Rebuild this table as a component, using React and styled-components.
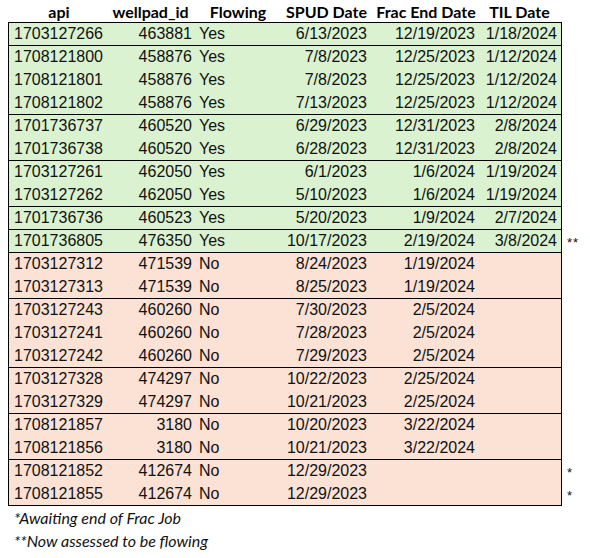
import React from "react";
import styled, { createGlobalStyle } from "styled-components";

const GlobalStyle = createGlobalStyle`
  body {
    margin: 0;
    background: #fff;
  }
`;

// column layout shared by header, rows
const columns = [
  { key: "api", title: "api", width: 95, align: "left", pad: 5 },
  { key: "wellpad", title: "wellpad_id", width: 93, align: "right", pad: 5 },
  { key: "flowing", title: "Flowing", width: 82, align: "left", pad: 2 },
  { key: "spud", title: "SPUD Date", width: 95, align: "right", pad: 7 },
  { key: "frac", title: "Frac End Date", width: 104, align: "right", pad: 3 },
  { key: "til", title: "TIL Date", width: 83, align: "right", pad: 4 },
];

const template = columns.map((c) => c.width + "px").join(" ");

const fills = {
  green: "#daf2d0",
  red: "#fbe2d5",
};

const groups = [
  { fill: "green", rows: [["1703127266", "463881", "Yes", "6/13/2023", "12/19/2023", "1/18/2024"]] },
  {
    fill: "green",
    rows: [
      ["1708121800", "458876", "Yes", "7/8/2023", "12/25/2023", "1/12/2024"],
      ["1708121801", "458876", "Yes", "7/8/2023", "12/25/2023", "1/12/2024"],
      ["1708121802", "458876", "Yes", "7/13/2023", "12/25/2023", "1/12/2024"],
    ],
  },
  {
    fill: "green",
    rows: [
      ["1701736737", "460520", "Yes", "6/29/2023", "12/31/2023", "2/8/2024"],
      ["1701736738", "460520", "Yes", "6/28/2023", "12/31/2023", "2/8/2024"],
    ],
  },
  {
    fill: "green",
    rows: [
      ["1703127261", "462050", "Yes", "6/1/2023", "1/6/2024", "1/19/2024"],
      ["1703127262", "462050", "Yes", "5/10/2023", "1/6/2024", "1/19/2024"],
    ],
  },
  { fill: "green", rows: [["1701736736", "460523", "Yes", "5/20/2023", "1/9/2024", "2/7/2024"]] },
  { fill: "green", rows: [["1701736805", "476350", "Yes", "10/17/2023", "2/19/2024", "3/8/2024", "**"]] },
  {
    fill: "red",
    rows: [
      ["1703127312", "471539", "No", "8/24/2023", "1/19/2024", ""],
      ["1703127313", "471539", "No", "8/25/2023", "1/19/2024", ""],
    ],
  },
  {
    fill: "red",
    rows: [
      ["1703127243", "460260", "No", "7/30/2023", "2/5/2024", ""],
      ["1703127241", "460260", "No", "7/28/2023", "2/5/2024", ""],
      ["1703127242", "460260", "No", "7/29/2023", "2/5/2024", ""],
    ],
  },
  {
    fill: "red",
    rows: [
      ["1703127328", "474297", "No", "10/22/2023", "2/25/2024", ""],
      ["1703127329", "474297", "No", "10/21/2023", "2/25/2024", ""],
    ],
  },
  {
    fill: "red",
    rows: [
      ["1708121857", "3180", "No", "10/20/2023", "3/22/2024", ""],
      ["1708121856", "3180", "No", "10/21/2023", "3/22/2024", ""],
    ],
  },
  {
    fill: "red",
    rows: [
      ["1708121852", "412674", "No", "12/29/2023", "", "", "*"],
      ["1708121855", "412674", "No", "12/29/2023", "", "", "*"],
    ],
  },
];

const Page = styled.div`
  padding-left: 8px;
  width: 590px;
  box-sizing: border-box;
`;

const HeaderRow = styled.div`
  display: grid;
  grid-template-columns: ${template};
  height: 22px;
  margin-left: 1px;
  align-items: center;
`;

const HeaderCell = styled.div`
  font-family: Lato, "Liberation Sans", sans-serif;
  font-weight: 700;
  font-size: 16px;
  color: #000;
  text-align: center;
  white-space: nowrap;
  padding-left: ${(p) => p.$shift || 0}px;
`;

const SheetArea = styled.div`
  display: flex;
  align-items: flex-start;
`;

const Sheet = styled.div`
  border: 1px solid #000;
  display: flex;
  flex-direction: column;
`;

const Group = styled.div`
  display: flex;
  flex-direction: column;
  gap: 1px;
  background: ${(p) => fills[p.$fill]};
  & + & {
    border-top: 1px solid #000;
  }
`;

const Row = styled.div`
  display: grid;
  grid-template-columns: ${template};
  height: 22px;
  align-items: center;
`;

const Cell = styled.div`
  font-family: "Liberation Sans", Arial, sans-serif;
  font-size: 16px;
  color: #111;
  white-space: nowrap;
  text-align: ${(p) => p.$align};
  padding-left: ${(p) => (p.$align === "left" ? p.$pad : 0)}px;
  padding-right: ${(p) => (p.$align === "right" ? p.$pad : 0)}px;
`;

// right-hand asterisk column mirrors the row grid
const NoteColumn = styled.div`
  display: flex;
  flex-direction: column;
  padding-top: 1px;
  margin-left: 5px;
`;

const NoteGroup = styled.div`
  display: flex;
  flex-direction: column;
  gap: 1px;
  & + & {
    margin-top: 1px;
  }
`;

const NoteSlot = styled.div`
  box-sizing: border-box;
  height: 22px;
  display: flex;
  align-items: center;
  font-family: "Liberation Sans", Arial, sans-serif;
  font-size: 13px;
  color: #111;
  letter-spacing: 1px;
  line-height: 1;
  padding-top: 3px;
`;

const Footnotes = styled.div`
  padding-left: 6px;
  font-family: Lato, "Liberation Sans", sans-serif;
  font-style: italic;
  font-size: 16px;
  line-height: 23px;
  color: #111;
`;

const FootLine = styled.div`
  white-space: nowrap;
`;

export default function App() {
  return (
    <Page>
      <GlobalStyle />
      <HeaderRow>
        {columns.map((c) => (
          <HeaderCell key={c.key} $shift={c.key === "api" ? 5 : 0}>
            {c.title}
          </HeaderCell>
        ))}
      </HeaderRow>
      <SheetArea>
        <Sheet>
          {groups.map((g, gi) => (
            <Group key={gi} $fill={g.fill}>
              {g.rows.map((r) => (
                <Row key={r[0]}>
                  {columns.map((c, ci) => (
                    <Cell key={c.key} $align={c.align} $pad={c.pad}>
                      {r[ci]}
                    </Cell>
                  ))}
                </Row>
              ))}
            </Group>
          ))}
        </Sheet>
        <NoteColumn>
          {groups.map((g, gi) => (
            <NoteGroup key={gi}>
              {g.rows.map((r) => (
                <NoteSlot key={r[0]}>{r[6] || ""}</NoteSlot>
              ))}
            </NoteGroup>
          ))}
        </NoteColumn>
      </SheetArea>
      <Footnotes>
        <FootLine>*Awaiting end of Frac Job</FootLine>
        <FootLine>**Now assessed to be flowing</FootLine>
      </Footnotes>
    </Page>
  );
}
